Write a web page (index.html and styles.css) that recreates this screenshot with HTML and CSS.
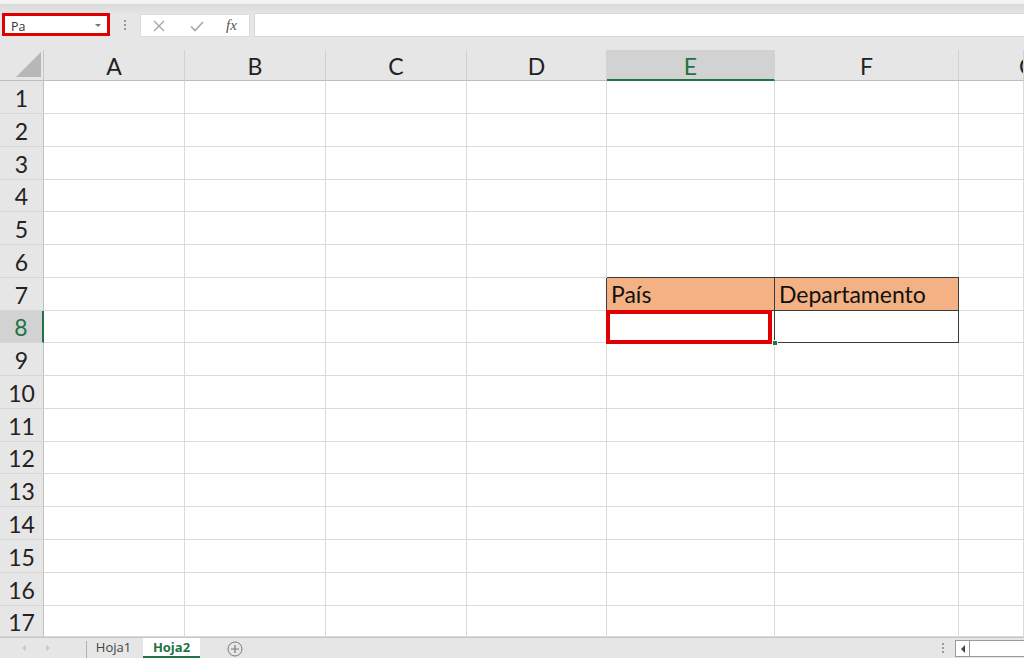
FILE: index.html
```html
<!DOCTYPE html>
<html lang="es">
<head>
<meta charset="utf-8">
<title>Hoja2</title>
<link rel="stylesheet" href="styles.css">
</head>
<body>
<div class="app">
  <div class="topstrip"></div>
  <div class="fbar">
    <div class="namebox"><span class="nb-text">Pa</span><span class="nb-arrow"></span></div>
    <div class="fb-dots"><span></span><span></span><span></span></div>
    <div class="fb-buttons">
      <svg class="ico" width="14" height="14" viewBox="0 0 14 14"><path d="M2 2 L12 12 M12 2 L2 12" stroke="#a6a6a6" stroke-width="1.4" fill="none"/></svg>
      <svg class="ico" width="16" height="14" viewBox="0 0 16 14"><path d="M2 7.5 L6 11.5 L14 3" stroke="#a6a6a6" stroke-width="1.6" fill="none"/></svg>
      <span class="fx">fx</span>
    </div>
    <div class="fb-input"></div>
  </div>

  <div class="sheet">
    <div class="corner"><svg width="44" height="31" viewBox="0 0 44 31"><polygon points="41,2 41,27 16,27" fill="#b7b7b7"/></svg></div>
    <div class="ch">A</div><div class="ch">B</div><div class="ch">C</div><div class="ch">D</div><div class="ch sel">E</div><div class="ch">F</div><div class="ch last">G</div>

    <div class="rh">1</div><div class="c"></div><div class="c"></div><div class="c"></div><div class="c"></div><div class="c"></div><div class="c"></div><div class="c"></div>
    <div class="rh">2</div><div class="c"></div><div class="c"></div><div class="c"></div><div class="c"></div><div class="c"></div><div class="c"></div><div class="c"></div>
    <div class="rh">3</div><div class="c"></div><div class="c"></div><div class="c"></div><div class="c"></div><div class="c"></div><div class="c"></div><div class="c"></div>
    <div class="rh">4</div><div class="c"></div><div class="c"></div><div class="c"></div><div class="c"></div><div class="c"></div><div class="c"></div><div class="c"></div>
    <div class="rh">5</div><div class="c"></div><div class="c"></div><div class="c"></div><div class="c"></div><div class="c"></div><div class="c"></div><div class="c"></div>
    <div class="rh">6</div><div class="c"></div><div class="c"></div><div class="c"></div><div class="c"></div><div class="c"></div><div class="c"></div><div class="c"></div>
    <div class="rh">7</div><div class="c"></div><div class="c"></div><div class="c"></div><div class="c"></div><div class="c tb th">País</div><div class="c tb th">Departamento</div><div class="c"></div>
    <div class="rh sel">8</div><div class="c"></div><div class="c"></div><div class="c"></div><div class="c"></div><div class="c tb active"><span class="redbox"></span><span class="handle"></span></div><div class="c tb"></div><div class="c"></div>
    <div class="rh">9</div><div class="c"></div><div class="c"></div><div class="c"></div><div class="c"></div><div class="c"></div><div class="c"></div><div class="c"></div>
    <div class="rh">10</div><div class="c"></div><div class="c"></div><div class="c"></div><div class="c"></div><div class="c"></div><div class="c"></div><div class="c"></div>
    <div class="rh">11</div><div class="c"></div><div class="c"></div><div class="c"></div><div class="c"></div><div class="c"></div><div class="c"></div><div class="c"></div>
    <div class="rh">12</div><div class="c"></div><div class="c"></div><div class="c"></div><div class="c"></div><div class="c"></div><div class="c"></div><div class="c"></div>
    <div class="rh">13</div><div class="c"></div><div class="c"></div><div class="c"></div><div class="c"></div><div class="c"></div><div class="c"></div><div class="c"></div>
    <div class="rh">14</div><div class="c"></div><div class="c"></div><div class="c"></div><div class="c"></div><div class="c"></div><div class="c"></div><div class="c"></div>
    <div class="rh">15</div><div class="c"></div><div class="c"></div><div class="c"></div><div class="c"></div><div class="c"></div><div class="c"></div><div class="c"></div>
    <div class="rh">16</div><div class="c"></div><div class="c"></div><div class="c"></div><div class="c"></div><div class="c"></div><div class="c"></div><div class="c"></div>
    <div class="rh">17</div><div class="c"></div><div class="c"></div><div class="c"></div><div class="c"></div><div class="c"></div><div class="c"></div><div class="c"></div>
  </div>

  <div class="tabbar">
    <div class="tab-nav">
      <svg width="8" height="8" viewBox="0 0 8 8"><polygon points="6,1 6,7 2,4" fill="#c8c8c8"/></svg>
      <svg width="8" height="8" viewBox="0 0 8 8"><polygon points="2,1 2,7 6,4" fill="#c8c8c8"/></svg>
    </div>
    <div class="tab-sep"></div>
    <div class="tab">Hoja1</div>
    <div class="tab current">Hoja2</div>
    <div class="tab-add"><svg width="16" height="16" viewBox="0 0 16 16"><circle cx="8" cy="8" r="7" stroke="#7a7a7a" stroke-width="1" fill="none"/><path d="M8 4 V12 M4 8 H12" stroke="#7a7a7a" stroke-width="1.2"/></svg></div>
    <div class="tab-spacer"></div>
    <div class="tab-dots"><span></span><span></span><span></span></div>
    <div class="hscroll">
      <div class="hs-btn"><svg width="6" height="8" viewBox="0 0 6 8"><polygon points="5,0 5,8 1,4" fill="#444"/></svg></div>
      <div class="hs-track"></div>
    </div>
  </div>
</div>
</body>
</html>
```

FILE: styles.css
```css
* { box-sizing: border-box; }
html, body { margin: 0; padding: 0; }
body {
  width: 1024px;
  height: 658px;
  overflow: hidden;
  background: #ffffff;
  font-family: "Lato", "Open Sans", sans-serif;
}
.app { width: 1024px; height: 658px; display: flex; flex-direction: column; }

.topstrip { height: 4px; background: #f3f2f1; flex: none; }

.fbar {
  height: 46px;
  flex: none;
  background: linear-gradient(#d9d9d9 0, #e3e3e3 8px, #e6e6e6 10px, #e6e6e6 100%);
  display: flex;
  align-items: flex-start;
  padding-top: 9px;
}
.namebox {
  margin-left: 2px;
  width: 108px;
  height: 23px;
  border: 3px solid #e00000;
  background: #fff;
  display: flex;
  align-items: center;
  justify-content: space-between;
  padding: 0 6px 0 6px;
}
.nb-text {
  font-family: "Open Sans", "Noto Sans", sans-serif;
  font-size: 12.5px;
  color: #333;
  line-height: 1;
  padding-top: 6px;
}
.nb-arrow {
  width: 0; height: 0;
  border-left: 3px solid transparent;
  border-right: 3px solid transparent;
  border-top: 3px solid #777;
  margin-top: 2px;
}
.fb-dots {
  width: 30px;
  height: 24px;
  display: flex;
  flex-direction: column;
  align-items: center;
  justify-content: center;
  gap: 2px;
}
.fb-dots span { width: 2px; height: 2px; background: #9a9a9a; }

.fb-buttons {
  margin-top: 1px;
  width: 110px;
  height: 23px;
  background: #fff;
  border: 1px solid #dcdcdc;
  display: flex;
  align-items: center;
  padding-left: 11px;
  gap: 23px;
}
.fb-buttons .ico { flex: none; }
.fx {
  font-family: "Liberation Serif", "DejaVu Serif", serif;
  font-style: italic;
  font-size: 15px;
  color: #555;
  line-height: 1;
  margin-left: -2px;
}
.fb-input {
  margin-left: 4px;
  flex: 1;
  height: 24px;
  background: #fff;
  border: 1px solid #d6d6d6;
  border-right: none;
}

.sheet {
  flex: none;
  display: grid;
  grid-template-columns: 44px 141px 141px 141px 140px 168px 184px 65px;
  grid-template-rows: 31px 33px 33px 33px 32px 33px 33px 33px 32px 33px 33px 33px 32px 33px 33px 33px 33px 31px;
  height: 587px;
  overflow: hidden;
}
.corner {
  background: #e6e6e6;
  border-right: 1px solid #c8c8c8;
  border-bottom: 1px solid #bdbdbd;
}
.corner svg { display: block; }
.ch {
  background: #e6e6e6;
  border-right: 1px solid #d2d2d2;
  border-bottom: 1px solid #bdbdbd;
  display: flex;
  align-items: center;
  justify-content: center;
  font-size: 23px;
  color: #222;
  padding-top: 1px;
}
.ch.sel {
  background: #d2d2d2;
  color: #217346;
  border-bottom: 2px solid #217346;
  padding-top: 2px;
}
.ch.last {
  justify-content: flex-start;
  padding-left: 60px;
  overflow: hidden;
}
.rh {
  background: #e6e6e6;
  border-right: 1px solid #c0c0c0;
  border-bottom: 1px solid #d6d6d6;
  display: flex;
  align-items: center;
  justify-content: center;
  font-size: 23px;
  color: #222;
  padding-top: 1px;
}
.rh.sel {
  background: #d2d2d2;
  color: #217346;
  border-right: 2px solid #217346;
}
.c {
  border-right: 1px solid #dadada;
  border-bottom: 1px solid #dadada;
  position: relative;
}
.c.tb {
  border-right: 1px solid #3a3a3a;
  border-bottom: 1px solid #3a3a3a;
  box-shadow: -1px 0 0 #3a3a3a, 0 -1px 0 #3a3a3a;
}
.c.th {
  background: #f4b183;
  font-size: 23px;
  color: #111;
  display: flex;
  align-items: flex-end;
  padding: 0 0 1px 4px;
  line-height: 1.2;
  white-space: nowrap;
}
.c.active { z-index: 2; }
.redbox {
  position: absolute;
  left: -1px;
  top: -1px;
  width: 166px;
  height: 34px;
  border: 4px solid #e00000;
}
.handle {
  position: absolute;
  right: -4px;
  bottom: -4px;
  width: 6px;
  height: 6px;
  background: #217346;
  border: 1px solid #fff;
}

.tabbar {
  flex: 1;
  background: #e6e6e6;
  border-top: 1px solid #c6c6c6;
  display: flex;
  align-items: stretch;
  font-family: "Open Sans", "Noto Sans", sans-serif;
  font-size: 13px;
}
.tab-nav {
  width: 86px;
  display: flex;
  align-items: center;
  padding-left: 20px;
  gap: 16px;
}
.tab-nav svg { display: block; }
.tab-sep { width: 1px; background: #b0b0b0; margin: 3px 0 0 0; }
.tab {
  width: 56px;
  display: flex;
  align-items: center;
  justify-content: center;
  color: #444;
  line-height: 1;
  padding-bottom: 1px;
  padding-right: 3px;
}
.tab.current {
  background: #fff;
  color: #217346;
  font-weight: 700;
  border-bottom: 2px solid #217346;
  width: 57px;
  padding-bottom: 0;
  padding-right: 0;
}
.tab-add {
  width: 70px;
  display: flex;
  align-items: center;
  justify-content: center;
  padding-top: 2px;
}
.tab-add svg { display: block; }
.tab-spacer { flex: 1; }
.tab-dots {
  width: 14px;
  display: flex;
  flex-direction: column;
  align-items: center;
  justify-content: center;
  gap: 2px;
}
.tab-dots span { width: 2px; height: 2px; background: #9a9a9a; }
.hscroll {
  margin-left: 5px;
  width: 69px;
  display: flex;
  padding-top: 2px;
}
.hs-btn {
  width: 15px;
  height: 17px;
  background: #fff;
  border: 1px solid #9a9a9a;
  display: flex;
  align-items: center;
  justify-content: center;
}
.hs-track {
  flex: 1;
  height: 17px;
  background: #fff;
  border-top: 1px solid #9a9a9a;
  border-bottom: 1px solid #9a9a9a;
}
```
